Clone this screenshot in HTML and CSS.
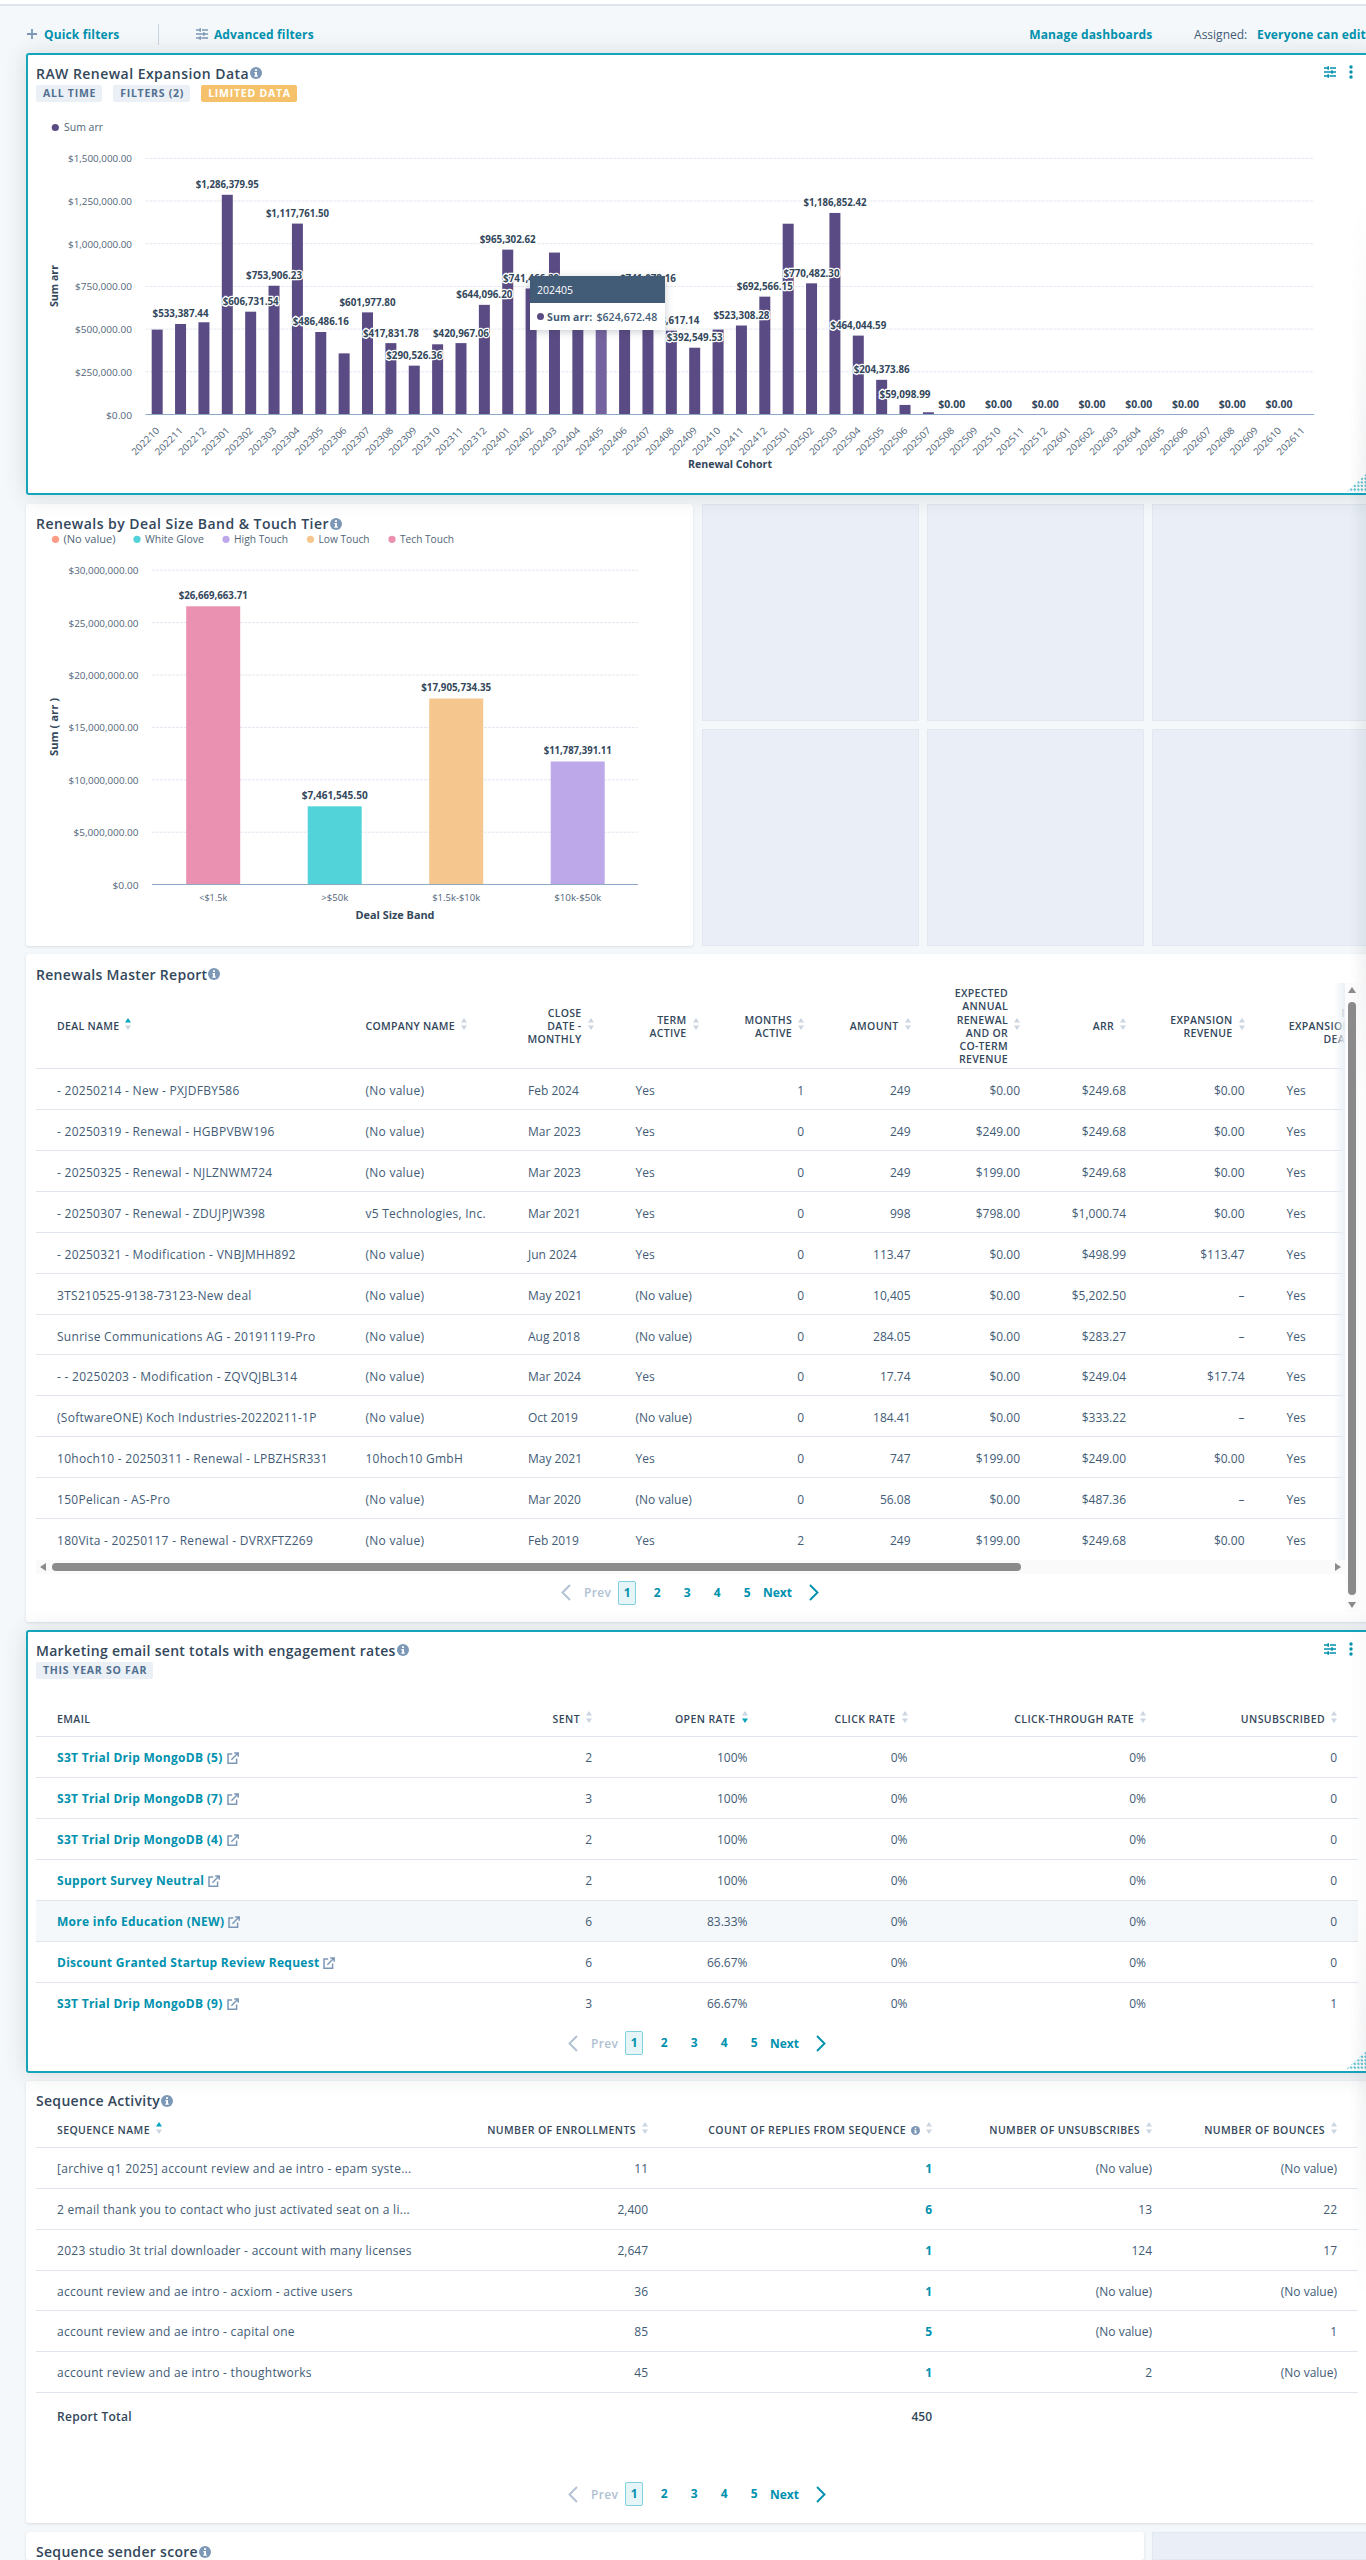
FILE: index.html
```html
<!DOCTYPE html>
<html lang="en">
<head>
    <meta charset="UTF-8">
    <title>Renewals Dashboard</title>
    <link rel="stylesheet" href="styles.css">
</head>
<body>

    <!-- Shared icons -->
    <svg class="sprite" aria-hidden="true">
        <symbol id="info" viewBox="0 0 12 12">
            <circle cx="6" cy="6" r="6" fill="#7c98b6"/>
            <path d="M5 2.2h2v1.7H5zM4.4 5H7v3.6h.8v1.2H4.3V8.6h.8V6.2h-.7z" fill="#fff"/>
        </symbol>
        <symbol id="sliders" viewBox="0 0 12 12">
            <path d="M0 2h4.8M6 2h6M0 6h7.4M8.6 6H12M0 10h4.2M5.4 10H12M4.2 .2v3.6M8 4.2v3.6M4.2 8.2v3.6" fill="none" stroke="currentColor" stroke-width="1.6"/>
        </symbol>
        <symbol id="dots" viewBox="0 0 4 14">
            <path d="M2 2v0M2 7v0M2 12v0" stroke="currentColor" stroke-width="3.4" stroke-linecap="round"/>
        </symbol>
        <symbol id="external" viewBox="0 0 12 12">
            <path d="M5.2 1.9H1v9.3h8.6V6.6M7.2 .9h4v3.9M11 1L4.4 7.7" fill="none" stroke="#7c98b6" stroke-width="1.5"/>
        </symbol>
        <symbol id="prev" viewBox="0 0 10 17">
            <path d="M9 1L1.5 8.5L9 16" fill="none" stroke="currentColor" stroke-width="1.9"/>
        </symbol>
        <symbol id="next" viewBox="0 0 10 17">
            <path d="M1 1L8.5 8.5L1 16" fill="none" stroke="currentColor" stroke-width="1.9"/>
        </symbol>
    </svg>

    <div class="topbar"></div>

    <div class="toolbar">
        <svg class="plus" viewBox="0 0 10 10"><path d="M5 0v10M0 5h10" stroke="currentColor" stroke-width="1.8"/></svg>
        <a class="link quick">Quick filters</a>
        <span class="divider"></span>
        <svg class="sliders"><use href="#sliders"/></svg>
        <a class="link advanced">Advanced filters</a>
        <a class="link manage">Manage dashboards</a>
        <span class="assigned">Assigned:</span>
        <a class="link everyone">Everyone can edit</a>
    </div>

    <div class="dashboard">

        <!-- RAW Renewal Expansion Data -->
        <div class="card full active">
            <h2 class="wide"><span>RAW Renewal Expansion Data</span><svg class="info"><use href="#info"/></svg></h2>
            <div class="tags">
                <span class="tag">ALL TIME</span>
                <span class="tag">FILTERS (2)</span>
                <span class="tag warn">LIMITED DATA</span>
            </div>
            <div class="actions"><svg class="sliders"><use href="#sliders"/></svg><svg class="dots"><use href="#dots"/></svg></div>
            <svg class="chart" id="renewalChart" width="1330" height="390" viewBox="36 102 1330 390"></svg>
            <div class="tooltip">
                <div class="tooltip-head">202405</div>
                <div class="tooltip-body"><i></i><b>Sum arr:</b><span>$624,672.48</span></div>
            </div>
            <div class="resize"></div>
        </div>

        <!-- Renewals by Deal Size Band -->
        <div class="card half">
            <h2 class="wide"><span>Renewals by Deal Size Band &amp; Touch Tier</span><svg class="info"><use href="#info"/></svg></h2>
            <svg class="chart" id="bandChart" width="646" height="408" viewBox="36 533 646 408"></svg>
        </div>
        <div class="empty"></div>
        <div class="empty"></div>
        <div class="empty"></div>
        <div class="empty"></div>
        <div class="empty"></div>
        <div class="empty"></div>

        <!-- Renewals Master Report -->
        <div class="card full tall">
            <h2><span>Renewals Master Report</span><svg class="info"><use href="#info"/></svg></h2>
            <div class="scroll-wrap">
                <div class="scroll-main">
                    <div class="table-clip"><table class="master" id="masterTable"></table></div>
                    <div class="hscroll"><i class="arrow-left"></i><span></span><i class="arrow-right"></i></div>
                    <div class="pager"></div>
                </div>
                <div class="vscroll"><i class="arrow-up"></i><span></span><i class="arrow-down"></i></div>
            </div>
        </div>

        <!-- Marketing email -->
        <div class="card full active">
            <h2><span>Marketing email sent totals with engagement rates</span><svg class="info"><use href="#info"/></svg></h2>
            <div class="tags"><span class="tag">THIS YEAR SO FAR</span></div>
            <div class="actions"><svg class="sliders"><use href="#sliders"/></svg><svg class="dots"><use href="#dots"/></svg></div>
            <table class="emails" id="emailTable"></table>
            <div class="pager"></div>
            <div class="resize"></div>
        </div>

        <!-- Sequence Activity -->
        <div class="card full">
            <h2><span>Sequence Activity</span><svg class="info"><use href="#info"/></svg></h2>
            <table class="sequences" id="sequenceTable"></table>
            <div class="pager low"></div>
        </div>

        <!-- Sequence sender score -->
        <div class="card sender">
            <h2><span>Sequence sender score</span><svg class="info"><use href="#info"/></svg></h2>
        </div>
        <div class="empty"></div>
    </div>

    <div class="edge-shade"></div>

    <script src="script.js"></script>
</body>
</html>
```
FILE: styles.css
```css
/* General Styling */
* {
    box-sizing: border-box;
}

body {
    position: relative;
    margin: 0;
    width: 1366px;
    height: 2560px;
    overflow: hidden;
    background: #f5f8fa;
    font-family: 'Open Sans', 'Noto Sans', sans-serif;
    font-size: 12px;
    color: #425b76;
}

.sprite {
    display: none;
}

.topbar {
    height: 6px;
    background: #fff;
    border-bottom: 2px solid #dfe5ec;
}

/* Toolbar */
.toolbar {
    display: flex;
    align-items: center;
    height: 47px;
    padding: 9px 0 0 27px;
    white-space: nowrap;
}

.link {
    color: #0091ae;
    font-weight: 700;
}

.toolbar .link {
    letter-spacing: 0.15px;
}

.plus {
    width: 10px;
    height: 10px;
    color: #7c98b6;
}

.quick {
    width: 114px;
    margin-left: 7px;
}

.divider {
    width: 1px;
    height: 21px;
    background: #cbd6e2;
}

.sliders {
    width: 12px;
    height: 12px;
}

.toolbar .sliders {
    margin-left: 37px;
    color: #7c98b6;
}

.advanced {
    margin-left: 6px;
    width: 816px;
}

.manage {
    width: 165px;
}

.assigned {
    width: 63px;
}

/* Dashboard grid */
.dashboard {
    display: grid;
    grid-template-columns: repeat(6, 217.2px);
    grid-template-rows: repeat(11, 216.9px) 28px;
    gap: 8.44px 8px;
    padding-left: 26px;
}

.card {
    position: relative;
    background: #fff;
    border: 2px solid #fff;
    border-radius: 3px;
    padding: 9px 8px 0;
    box-shadow: 0 1px 3px rgba(45, 62, 80, 0.14);
    grid-row: span 2;
    min-width: 0;
}

.full {
    grid-column: span 6;
    width: 1350px;
}

.half {
    grid-column: span 3;
    margin-right: 1px;
}

.tall {
    grid-row: span 3;
}

.sender {
    grid-column: span 5;
    grid-row: span 1;
    border-bottom: 0;
}

.active {
    border-color: #14a5bb;
    box-shadow: 0 1px 22px rgba(45, 62, 80, 0.16);
    z-index: 1;
}

.empty {
    background: #eaeff7;
    border: 1px solid #e2e8ef;
}

h2 {
    display: flex;
    align-items: center;
    height: 18px;
    margin: 0;
    font-size: 14px;
    font-weight: 600;
    letter-spacing: 0.3px;
    color: #33475b;
    white-space: nowrap;
}

.wide {
    letter-spacing: 0.46px;
}

.info {
    width: 12px;
    height: 12px;
    margin-left: 1px;
}

.tags {
    display: flex;
    gap: 11px;
    margin-top: 3px;
}

.tag {
    height: 17px;
    padding: 0 6px 0 7px;
    border-radius: 2px;
    background: #eaf0f6;
    color: #516f90;
    font-size: 10.5px;
    font-weight: 700;
    line-height: 16px;
    letter-spacing: 0.75px;
}

.warn {
    background: #f5c26b;
    color: #fff;
}

.actions {
    position: absolute;
    top: 10px;
    left: 1296px;
    display: flex;
    gap: 13px;
    color: #0091ae;
}

.actions .sliders {
    height: 14px;
}

.dots {
    width: 4px;
    height: 14px;
}

.resize {
    position: absolute;
    left: 1318px;
    bottom: 1px;
    width: 24px;
    height: 22px;
    background: radial-gradient(circle at 1.5px 1.5px, #5fc0cf 1px, transparent 1.3px) 0 0 / 3.6px 3.6px;
    clip-path: polygon(0 100%, 100% 0, 100% 100%);
}

/* Charts */
.chart {
    display: block;
}

.chart text {
    font-size: 9.5px;
    fill: #516579;
}

.chart .grid {
    stroke: #e3e7f0;
    stroke-dasharray: 3 1;
}

.chart .axis {
    stroke: #8ea9c8;
    stroke-width: 1.2;
}

.chart .value {
    font-size: 9.8px;
    font-weight: 700;
    fill: #33475b;
    stroke: #fff;
    stroke-width: 2.6px;
    stroke-linejoin: round;
    paint-order: stroke;
}

.chart .title {
    font-size: 10.5px;
    font-weight: 700;
    fill: #33475b;
}

.chart .legend {
    font-size: 10.5px;
}

.tooltip {
    position: absolute;
    left: 502px;
    top: 221px;
    width: 135px;
    height: 54px;
    background: #fff;
    box-shadow: 0 2px 8px rgba(45, 62, 80, 0.25);
}

.tooltip-head {
    height: 27px;
    padding-left: 7px;
    background: #425b76;
    color: #fff;
    font-size: 10.5px;
    line-height: 28px;
}

.tooltip-body {
    display: flex;
    align-items: center;
    height: 27px;
    padding-left: 7px;
    font-size: 10.5px;
    font-weight: 600;
    letter-spacing: 0.1px;
    white-space: nowrap;
}

.tooltip-body i {
    width: 7px;
    height: 7px;
    margin-right: 3px;
    border-radius: 50%;
    background: #5b4b84;
}

.tooltip-body b {
    margin-right: 4px;
    font-weight: 700;
}

/* Tables */
table {
    border-collapse: separate;
    border-spacing: 0;
    table-layout: fixed;
}

th, td {
    padding: 0 21px;
    border-bottom: 1px solid #e0e5ee;
    text-align: right;
    white-space: nowrap;
}

th {
    padding-top: 2px;
    font-size: 10.5px;
    font-weight: 600;
    line-height: 13.2px;
    letter-spacing: 0.4px;
    color: #33475b;
}

td {
    height: 40.88px;
    line-height: 16px;
    padding-top: 2px;
}

td:first-child {
    letter-spacing: 0.28px;
}

tr:last-child td {
    border-bottom: 0;
}

.left {
    text-align: left;
}

.head {
    display: flex;
    align-items: center;
    justify-content: flex-end;
}

.left .head {
    justify-content: flex-start;
}

.head .info {
    width: 9px;
    height: 9px;
    margin-left: 5px;
}

.sort {
    width: 6px;
    height: 12px;
    margin: -5px 0 0 6px;
    flex: none;
    fill: #cbd6e2;
}

.sort .on {
    fill: #00a4bd;
}

td .link {
    display: flex;
    align-items: center;
    gap: 4px;
}

td .link svg {
    width: 12px;
    height: 12px;
}

.master {
    width: 1344px;
}

.master th {
    height: 86px;
    letter-spacing: 0.3px;
}

.master td {
    padding-top: 4px;
}

.master td:nth-child(2) {
    letter-spacing: 0.25px;
}

.emails {
    width: 1322px;
    margin-top: 22px;
}

.emails th {
    height: 36px;
}

.emails tr:nth-child(6) td {
    background: #f5f8fa;
}

.sequences {
    width: 1322px;
}

.sequences th {
    height: 38px;
    padding-top: 4px;
}

.sequences .total td {
    height: 46px;
    font-weight: 600;
    color: #33475b;
}

.count {
    color: #0091ae;
    font-weight: 700;
}

/* Scroll area */
.scroll-wrap {
    display: flex;
}

.scroll-main {
    width: 1309px;
}

.table-clip {
    position: relative;
    overflow: hidden;
}

.table-clip::after {
    content: "";
    position: absolute;
    top: 0;
    right: 0;
    width: 11px;
    height: 100%;
    background: linear-gradient(to right, rgba(238, 243, 248, 0), #e9f0f6);
}

.hscroll {
    display: flex;
    align-items: center;
    height: 14px;
    padding: 0 4px;
    background: #fafafa;
}

.hscroll span {
    width: 969px;
    height: 8px;
    margin: 0 auto 0 6px;
    border-radius: 4px;
    background: #8b8b8b;
}

.vscroll {
    display: flex;
    flex-direction: column;
    align-items: center;
    width: 14px;
    height: 629px;
    padding: 4px 0;
    background: #fcfcfc;
}

.vscroll span {
    width: 8px;
    height: 593px;
    margin: 9px 0 auto;
    border-radius: 4px;
    background: #8b8b8b;
}

.arrow-left, .arrow-right {
    border: 4px solid transparent;
}

.arrow-left {
    border-left: 0;
    border-right: 6px solid #8b8b8b;
}

.arrow-right {
    border-right: 0;
    border-left: 6px solid #8b8b8b;
}

.arrow-up, .arrow-down {
    border: 4px solid transparent;
}

.arrow-up {
    border-top: 0;
    border-bottom: 6px solid #8b8b8b;
}

.arrow-down {
    border-bottom: 0;
    border-top: 6px solid #8b8b8b;
}

/* Pagination */
.pager {
    display: flex;
    align-items: center;
    justify-content: center;
    width: 1308px;
    height: 24px;
    margin-top: 7px;
    color: #0091ae;
    font-weight: 700;
}

.active .pager, .low {
    width: 1322px;
    margin-top: 8px;
}

.pager.low {
    margin-top: 43px;
}

.pager svg {
    width: 10px;
    height: 17px;
}

.pager .off {
    color: #b0c1d4;
}

.pager .off-text {
    width: 27px;
    margin: 0 7px 0 13px;
    color: #b0c1d4;
    font-weight: 600;
    letter-spacing: 0.3px;
}

.pager .num {
    width: 18.4px;
    margin-right: 11.6px;
    text-align: center;
    line-height: 22px;
}

.pager .current {
    border: 1px solid #7fd1de;
    border-radius: 2px;
    background: #e5f5f8;
}

.pager .next-text {
    width: 29px;
    margin: 0 17px 0 -5px;
}

/* Soft shade along the right edge of the window */
.edge-shade {
    position: absolute;
    z-index: 2;
    top: 0;
    right: 0;
    width: 16px;
    height: 2560px;
    background: linear-gradient(to right, rgba(45, 62, 80, 0), rgba(45, 62, 80, 0.07));
    mask-image: linear-gradient(to bottom, transparent 200px, #000 480px, #000 950px, rgba(0, 0, 0, 0.3) 1100px, rgba(0, 0, 0, 0.3) 1900px, #000 2060px, transparent 2300px);
}
```
FILE: script.js
```js
// Renewal cohort chart: bar value, plus the label where one is shown
const cohorts = [
    [497000], [530000, "$533,387.44"], [540000], [1286379, "$1,286,379.95"], [602000, "$606,731.54"],
    [753906, "$753,906.23"], [1117761, "$1,117,761.50"], [483000, "$486,486.16"], [358000], [598000, "$601,977.80"],
    [417831, "$417,831.78"], [286000, "$290,526.36"], [411000], [418000, "$420,967.06"], [642000, "$644,096.20"],
    [965302, "$965,302.62"], [738000, "$741,466.29"], [948000], [600000], [624672],
    [580000], [738000, "$741,078.16"], [491000, "$493,617.14"], [391000, "$392,549.53"], [497000],
    [521000, "$523,308.28"], [690000, "$692,566.15"], [1117000], [768000, "$770,482.30"], [1180000, "$1,186,852.42"],
    [462000, "$464,044.59"], [203000, "$204,373.86"], [56000, "$59,098.99"], [13000]
];

function text(x, y, value, cls, width, anchor = "middle", extra = "") {
    return `<text class="${cls}" x="${x}" y="${y}" text-anchor="${anchor}" textLength="${width}" lengthAdjust="spacingAndGlyphs" ${extra}>${value}</text>`;
}

function drawRenewals() {
    const left = 145.5, step = 23.37, base = 414.5, scale = 256.2 / 1500000;
    const ticks = [["$1,500,000.00", 64], ["$1,250,000.00", 64], ["$1,000,000.00", 64], ["$750,000.00", 57], ["$500,000.00", 57], ["$250,000.00", 57], ["$0.00", 26]];
    let out = `<circle cx="55.3" cy="127.5" r="3.6" fill="#5b4b84"/>` + text(64, 131, "Sum arr", "legend", 39, "start");
    ticks.forEach(([label, width], i) => {
        const y = 158.3 + i * 42.7;
        out += text(132, y + 4, label, "tick", width, "end");
        if (i < 6) out += `<line class="grid" x1="${left}" x2="1314" y1="${y}" y2="${y}"/>`;
    });

    let labels = "";
    for (let i = 0; i < 50; i++) {
        const cx = left + step * (i + 0.5);
        const [value, label] = cohorts[i] || [0, i % 2 === 0 && i < 49 ? "$0.00" : ""];
        const h = value * scale;
        out += `<rect x="${cx - 5.5}" y="${base - h}" width="11" height="${h}" fill="${i === 19 ? "#75639f" : "#5b4b84"}"/>`;
        if (label) labels += text(cx, base - h - 6.6, label, "value", label.length > 11 ? 63 : label.length < 6 ? 27 : label.length < 11 ? 51 : 56);
        const month = (9 + i) % 12 + 1;
        const name = (2022 + Math.floor((9 + i) / 12)) + String(month).padStart(2, "0");
        out += text(cx + 3, 431, name, "tick", 35, "end", `transform="rotate(-45 ${cx + 3} 431)"`);
    }
    out += `<line class="axis" x1="${left}" x2="1314" y1="${base}" y2="${base}"/>` + labels;
    out += text(730, 468, "Renewal Cohort", "title", 84);
    out += text(58, 286, "Sum arr", "title", 42, "middle", `transform="rotate(-90 58 286)"`);
    document.getElementById("renewalChart").innerHTML = out;
}

function drawBands() {
    const legend = [["(No value)", 55.5, 52, "#ff9c86"], ["White Glove", 137, 59, "#51d3d9"], ["High Touch", 226, 54, "#bda9ea"], ["Low Touch", 310.5, 51, "#f5c78e"], ["Tech Touch", 392, 54, "#ea90b1"]];
    const ticks = [["$30,000,000.00", 70], ["$25,000,000.00", 70], ["$20,000,000.00", 70], ["$15,000,000.00", 70], ["$10,000,000.00", 70], ["$5,000,000.00", 65], ["$0.00", 26]];
    const bars = [["&lt;$1.5k", 606.3, "$26,669,663.71", 69, 28, "#ea90b1"], ["&gt;$50k", 806.3, "$7,461,545.50", 66, 27, "#51d3d9"], ["$1.5k-$10k", 698.5, "$17,905,734.35", 70, 48, "#f5c78e"], ["$10k-$50k", 761.5, "$11,787,391.11", 68, 47, "#bda9ea"]];
    let out = "";
    legend.forEach(([label, x, width, color]) => {
        out += `<circle cx="${x}" cy="539.3" r="3.6" fill="${color}"/>` + text(x + 8, 542.5, label, "legend", width, "start");
    });
    ticks.forEach(([label, width], i) => {
        const y = 570.2 + i * 52.4;
        out += text(138.5, y + 4, label, "tick", width, "end");
        if (i < 6) out += `<line class="grid" x1="152" x2="638" y1="${y}" y2="${y}"/>`;
    });
    bars.forEach(([name, top, label, width, nameWidth, color], i) => {
        const cx = 213.2 + i * 121.5;
        out += `<rect x="${cx - 27}" y="${top}" width="54" height="${884.5 - top}" fill="${color}"/>`;
        out += text(cx, top - 7.5, label, "value", width) + text(cx, 901, name, "tick", nameWidth);
    });
    out += `<line class="axis" x1="152" x2="638" y1="884.5" y2="884.5"/>`;
    out += text(395, 919, "Deal Size Band", "title", 79);
    out += text(58, 727, "Sum ( arr )", "title", 58, "middle", `transform="rotate(-90 58 727)"`);
    document.getElementById("bandChart").innerHTML = out;
}

// Tables
function sortIcon(dir) {
    return `<svg class="sort" viewBox="0 0 6 12"><path class="${dir === "up" ? "on" : ""}" d="M3 0L6 4.5H0z"/><path class="${dir === "down" ? "on" : ""}" d="M0 7.5H6L3 12z"/></svg>`;
}

function buildTable(id, columns, rows, total) {
    let html = "<colgroup>" + columns.map(c => `<col style="width:${c.width}px">`).join("") + "</colgroup><tr>";
    columns.forEach(c => {
        html += `<th class="${c.headLeft ? "left" : ""}"><div class="head"><span>${c.label}</span>${c.info ? '<svg class="info"><use href="#info"/></svg>' : ""}${c.sort === "none" ? "" : sortIcon(c.sort)}</div></th>`;
    });
    html += "</tr>";
    rows.forEach(row => {
        html += "<tr>" + row.map((cell, i) => {
            const c = columns[i];
            const body = c.link ? `<a class="link">${cell}<svg><use href="#external"/></svg></a>` : cell;
            return `<td class="${c.left ? "left" : ""} ${c.cls || ""}">${body}</td>`;
        }).join("") + "</tr>";
    });
    if (total) html += `<tr class="total">` + total.map((cell, i) => `<td class="${columns[i].left ? "left" : ""}">${cell}</td>`).join("") + "</tr>";
    document.getElementById(id).innerHTML = html;
}

const none = "(No value)";

buildTable("masterTable", [
    { label: "DEAL NAME", width: 308.5, left: true, headLeft: true, sort: "up" },
    { label: "COMPANY NAME", width: 162.5, left: true, headLeft: true },
    { label: "CLOSE<br>DATE -<br>MONTHLY", width: 107.5, left: true },
    { label: "TERM<br>ACTIVE", width: 105, left: true },
    { label: "MONTHS<br>ACTIVE", width: 105.5 },
    { label: "AMOUNT", width: 106.5 },
    { label: "EXPECTED<br>ANNUAL<br>RENEWAL<br>AND OR<br>CO-TERM<br>REVENUE", width: 109.5 },
    { label: "ARR", width: 106 },
    { label: "EXPANSION<br>REVENUE", width: 118.5 },
    { label: "IS<br>EXPANSION<br>DEAL", width: 118.5, left: true }
], [
    ["- 20250214 - New - PXJDFBY586", none, "Feb 2024", "Yes", "1", "249", "$0.00", "$249.68", "$0.00", "Yes"],
    ["- 20250319 - Renewal - HGBPVBW196", none, "Mar 2023", "Yes", "0", "249", "$249.00", "$249.68", "$0.00", "Yes"],
    ["- 20250325 - Renewal - NJLZNWM724", none, "Mar 2023", "Yes", "0", "249", "$199.00", "$249.68", "$0.00", "Yes"],
    ["- 20250307 - Renewal - ZDUJPJW398", "v5 Technologies, Inc.", "Mar 2021", "Yes", "0", "998", "$798.00", "$1,000.74", "$0.00", "Yes"],
    ["- 20250321 - Modification - VNBJMHH892", none, "Jun 2024", "Yes", "0", "113.47", "$0.00", "$498.99", "$113.47", "Yes"],
    ["3TS210525-9138-73123-New deal", none, "May 2021", none, "0", "10,405", "$0.00", "$5,202.50", "–", "Yes"],
    ["Sunrise Communications AG - 20191119-Pro", none, "Aug 2018", none, "0", "284.05", "$0.00", "$283.27", "–", "Yes"],
    ["- - 20250203 - Modification - ZQVQJBL314", none, "Mar 2024", "Yes", "0", "17.74", "$0.00", "$249.04", "$17.74", "Yes"],
    ["(SoftwareONE) Koch Industries-20220211-1P", none, "Oct 2019", none, "0", "184.41", "$0.00", "$333.22", "–", "Yes"],
    ["10hoch10 - 20250311 - Renewal - LPBZHSR331", "10hoch10 GmbH", "May 2021", "Yes", "0", "747", "$199.00", "$249.00", "$0.00", "Yes"],
    ["150Pelican - AS-Pro", none, "Mar 2020", none, "0", "56.08", "$0.00", "$487.36", "–", "Yes"],
    ["180Vita - 20250117 - Renewal - DVRXFTZ269", none, "Feb 2019", "Yes", "2", "249", "$199.00", "$249.68", "$0.00", "Yes"]
]);

buildTable("emailTable", [
    { label: "EMAIL", width: 377, left: true, headLeft: true, link: true, sort: "none" },
    { label: "SENT", width: 200 },
    { label: "OPEN RATE", width: 155.5, sort: "down" },
    { label: "CLICK RATE", width: 160 },
    { label: "CLICK-THROUGH RATE", width: 238.5 },
    { label: "UNSUBSCRIBED", width: 191 }
], [
    ["S3T Trial Drip MongoDB (5)", "2", "100%", "0%", "0%", "0"],
    ["S3T Trial Drip MongoDB (7)", "3", "100%", "0%", "0%", "0"],
    ["S3T Trial Drip MongoDB (4)", "2", "100%", "0%", "0%", "0"],
    ["Support Survey Neutral", "2", "100%", "0%", "0%", "0"],
    ["More info Education (NEW)", "6", "83.33%", "0%", "0%", "0"],
    ["Discount Granted Startup Review Request", "6", "66.67%", "0%", "0%", "0"],
    ["S3T Trial Drip MongoDB (9)", "3", "66.67%", "0%", "0%", "1"]
]);

buildTable("sequenceTable", [
    { label: "SEQUENCE NAME", width: 400, left: true, headLeft: true, sort: "up" },
    { label: "NUMBER OF ENROLLMENTS", width: 233 },
    { label: "COUNT OF REPLIES FROM SEQUENCE", width: 284, info: true, cls: "count" },
    { label: "NUMBER OF UNSUBSCRIBES", width: 220 },
    { label: "NUMBER OF BOUNCES", width: 185 }
], [
    ["[archive q1 2025] account review and ae intro - epam syste...", "11", "1", none, none],
    ["2 email thank you to contact who just activated seat on a li...", "2,400", "6", "13", "22"],
    ["2023 studio 3t trial downloader - account with many licenses", "2,647", "1", "124", "17"],
    ["account review and ae intro - acxiom - active users", "36", "1", none, none],
    ["account review and ae intro - capital one", "85", "5", none, "1"],
    ["account review and ae intro - thoughtworks", "45", "1", "2", none]
], ["Report Total", "", "450", "", ""]);

document.querySelectorAll(".pager").forEach(pager => {
    pager.innerHTML = `<svg class="off"><use href="#prev"/></svg><span class="off-text">Prev</span><span class="num current">1</span><span class="num">2</span><span class="num">3</span><span class="num">4</span><span class="num">5</span><span class="next-text">Next</span><svg><use href="#next"/></svg>`;
});

drawRenewals();
drawBands();
```
